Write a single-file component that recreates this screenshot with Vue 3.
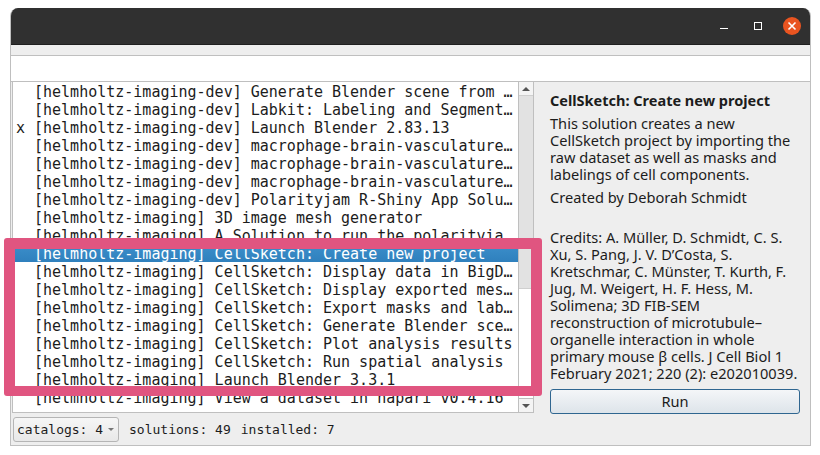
<script setup>
const rows = [
  { mark: '', text: '[helmholtz-imaging-dev] Generate Blender scene from …' },
  { mark: '', text: '[helmholtz-imaging-dev] Labkit: Labeling and Segment…' },
  { mark: 'x', text: '[helmholtz-imaging-dev] Launch Blender 2.83.13' },
  { mark: '', text: '[helmholtz-imaging-dev] macrophage-brain-vasculature…' },
  { mark: '', text: '[helmholtz-imaging-dev] macrophage-brain-vasculature…' },
  { mark: '', text: '[helmholtz-imaging-dev] macrophage-brain-vasculature…' },
  { mark: '', text: '[helmholtz-imaging-dev] Polarityjam R-Shiny App Solu…' },
  { mark: '', text: '[helmholtz-imaging] 3D image mesh generator' },
  { mark: '', text: '[helmholtz-imaging] A Solution to run the polaritvia' },
  { mark: '', text: '[helmholtz-imaging] CellSketch: Create new project', selected: true },
  { mark: '', text: '[helmholtz-imaging] CellSketch: Display data in BigD…' },
  { mark: '', text: '[helmholtz-imaging] CellSketch: Display exported mes…' },
  { mark: '', text: '[helmholtz-imaging] CellSketch: Export masks and lab…' },
  { mark: '', text: '[helmholtz-imaging] CellSketch: Generate Blender sce…' },
  { mark: '', text: '[helmholtz-imaging] CellSketch: Plot analysis results' },
  { mark: '', text: '[helmholtz-imaging] CellSketch: Run spatial analysis' },
  { mark: '', text: '[helmholtz-imaging] Launch Blender 3.3.1' },
  { mark: '', text: '[helmholtz-imaging] View a dataset in napari v0.4.16' }
]
</script>

<template>
  <div class="screen">
    <div class="window">
      <div class="titlebar">
        <span class="win-min"></span>
        <span class="win-max"></span>
        <span class="win-close">
          <svg width="24" height="24" viewBox="0 0 24 24">
            <circle cx="12" cy="12" r="9" fill="#e95420" />
            <path d="M8.5 8.5 L15.5 15.5 M15.5 8.5 L8.5 15.5" stroke="#fff" stroke-width="1.6" />
          </svg>
        </span>
      </div>
      <div class="menu-strip"></div>
      <div class="search"></div>
      <div class="content">
        <div class="list-pane">
          <div class="list">
            <div
              v-for="(row, i) in rows"
              :key="i"
              class="row"
              :class="{ selected: row.selected }"
            >
              <span class="mark">{{ row.mark }}</span>
              <span class="row-text">{{ row.text }}</span>
            </div>
          </div>
          <div class="scrollbar">
            <div class="sb-btn top"><span class="arrow-up"></span></div>
            <div class="sb-thumb"></div>
            <div class="sb-track"></div>
            <div class="sb-btn bottom"><span class="arrow-down"></span></div>
          </div>
        </div>
        <div class="details">
          <h1 class="title">CellSketch: Create new project</h1>
          <p class="para">This solution creates a new CellSketch project by importing the raw dataset as well as masks and labelings of cell components.</p>
          <p class="para">Created by Deborah Schmidt</p>
          <p class="para credits">Credits: A. Müller, D. Schmidt, C. S. Xu, S. Pang, J. V. D’Costa, S. Kretschmar, C. Münster, T. Kurth, F. Jug, M. Weigert, H. F. Hess, M. Solimena; 3D FIB-SEM reconstruction of microtubule–organelle interaction in whole primary mouse β cells. J Cell Biol 1 February 2021; 220 (2): e202010039.</p>
          <button class="run">Run</button>
        </div>
        <div class="status">
          <div class="catalogs">catalogs: 4<span class="arrow-down small"></span></div>
          <span class="stat">solutions: 49</span>
          <span class="stat">installed: 7</span>
        </div>
      </div>
    </div>
    <div class="highlight"></div>
  </div>
</template>

<style>
html, body {
  margin: 0;
  background: #fff;
}
</style>

<style scoped>
.screen {
  position: relative;
  width: 820px;
  height: 455px;
  padding: 8px 0 0 10px;
  box-sizing: border-box;
  overflow: hidden;
}

.window {
  width: 801px;
  height: 438px;
  display: flex;
  flex-direction: column;
  box-sizing: border-box;
  border: 1px solid #bfbfbf;
  border-top: 0;
  border-radius: 8px 8px 0 0;
  background: #eeeeee;
  overflow: hidden;
}

.titlebar {
  height: 37px;
  flex: none;
  display: flex;
  align-items: center;
  justify-content: flex-end;
  background: #303030;
  border-bottom: 1px solid #1f1f1f;
  box-sizing: border-box;
  padding-right: 6px;
}

.win-min {
  width: 8px;
  height: 1px;
  background: #fff;
  margin-top: 4px;
  margin-right: 26px;
}

.win-max {
  width: 8px;
  height: 8px;
  box-sizing: border-box;
  border: 1px solid #fff;
  margin-right: 18px;
}

.win-close {
  display: flex;
  width: 24px;
  height: 24px;
}

.menu-strip {
  height: 10px;
  flex: none;
  background: #eeeeee;
  border-bottom: 1px solid #bfbfbf;
}

.search {
  height: 25px;
  flex: none;
  background: #fff;
  border-bottom: 1px solid #bfbfbf;
}

.content {
  flex: 1;
  min-height: 0;
  display: grid;
  grid-template-columns: 523px 1fr;
  grid-template-rows: 331px 1fr;
}

.list-pane {
  display: flex;
  margin-left: 1px;
  border: 1px solid #bfbfbf;
  border-top: 0;
  box-sizing: border-box;
  background: #fff;
}

.list {
  flex: 1;
  min-width: 0;
  overflow: hidden;
  font-family: "DejaVu Sans Mono", monospace;
  font-size: 15px;
  color: #1c1c1c;
}

.row {
  height: 18px;
  line-height: 20px;
  display: flex;
  white-space: pre;
}

.row.selected {
  background: linear-gradient(#3c8fcb, #2f80bd);
  color: #fff;
}

.mark {
  width: 21px;
  padding-left: 3px;
  box-sizing: border-box;
  flex: none;
}

.scrollbar {
  width: 14px;
  flex: none;
  display: flex;
  flex-direction: column;
  border-left: 1px solid #bfbfbf;
}

.sb-btn {
  height: 14px;
  flex: none;
  display: flex;
  align-items: center;
  justify-content: center;
  background: #f4f4f4;
  box-sizing: border-box;
}

.sb-btn.top {
  border-bottom: 1px solid #cfcfcf;
}

.sb-btn.bottom {
  border-top: 1px solid #bfbfbf;
}

.sb-thumb {
  height: 192px;
  background: #e2e2e2;
  border-bottom: 1px solid #cfcfcf;
}

.sb-track {
  flex: 1;
  background: #fff;
}

.arrow-up {
  width: 0;
  height: 0;
  border: 4px solid transparent;
  border-top: 0;
  border-bottom: 4px solid #555;
}

.arrow-down {
  width: 0;
  height: 0;
  border: 4px solid transparent;
  border-bottom: 0;
  border-top: 4px solid #555;
}

.arrow-down.small {
  border-width: 3px;
  border-bottom: 0;
  border-top-color: #777;
  margin-left: 5px;
}

.details {
  grid-row: 1 / 3;
  grid-column: 2;
  padding: 10px 10px 0 16px;
  box-sizing: border-box;
  display: flex;
  flex-direction: column;
  font-family: "Noto Sans", sans-serif;
  font-size: 14.6px;
  line-height: 17px;
  color: #1c1c1c;
}

.title {
  margin: 0 0 6px;
  font-size: 14.5px;
  line-height: 17px;
  font-weight: 700;
}

.para {
  margin: 0 0 6px;
  width: 249px;
}

.credits {
  margin: 17px 0 0;
}

.run {
  margin-top: 7px;
  height: 25px;
  width: 250px;
  font: inherit;
  color: #1c1c1c;
  border: 1px solid #2f6690;
  border-radius: 3px;
  background: linear-gradient(#f4f6f8, #dde4ea);
  padding: 0;
}

.status {
  grid-column: 1;
  grid-row: 2;
  display: flex;
  align-items: center;
  padding-left: 2px;
  font-family: "DejaVu Sans Mono", monospace;
  font-size: 13px;
  color: #1c1c1c;
}

.catalogs {
  height: 25px;
  width: 106px;
  display: flex;
  align-items: center;
  box-sizing: border-box;
  padding-left: 3px;
  border: 1px solid #b5b5b5;
  border-radius: 3px;
  background: linear-gradient(#f6f6f6, #e8e8e8);
  margin-right: 10px;
}

.stat {
  margin-right: 10px;
}

.highlight {
  position: absolute;
  left: 4px;
  top: 238px;
  width: 538px;
  height: 158px;
  box-sizing: border-box;
  border: 11px solid #e05580;
  border-bottom-width: 10px;
  border-radius: 3px;
}
</style>
